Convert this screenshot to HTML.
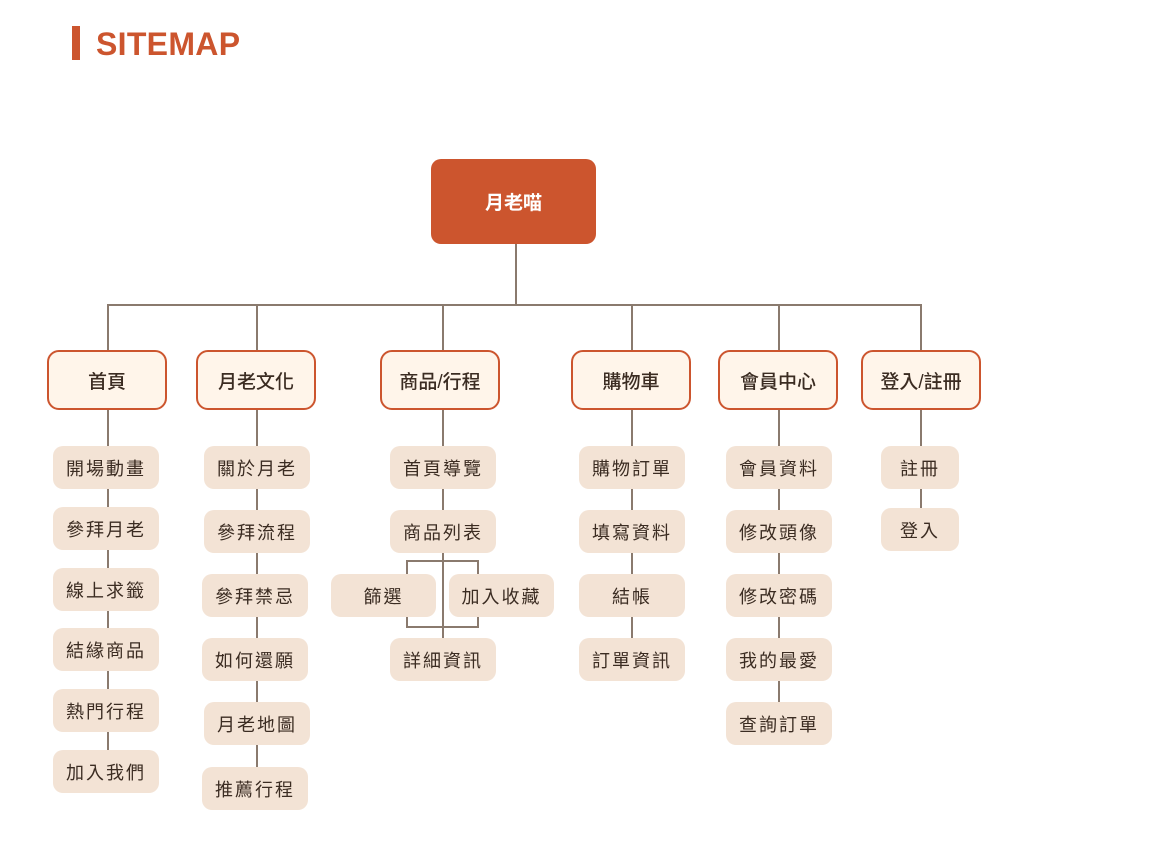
<!DOCTYPE html>
<html><head><meta charset="utf-8"><style>
body{margin:0;width:1152px;height:850px;background:#fff;position:relative;overflow:hidden;font-family:"Liberation Sans","Noto Sans CJK TC",sans-serif;color:#3b2c22}
.t{position:absolute;left:72px;top:26px;height:34px;border-left:8px solid #cc552e;padding-left:16px;font-size:32px;font-weight:bold;color:#cc552e;line-height:36px;letter-spacing:0.3px}
.b{position:absolute;display:flex;align-items:center;justify-content:center;box-sizing:border-box}
.r{background:#cc552e;color:#fff;border-radius:10px;font-weight:bold;font-size:19px}
.l1{width:120px;height:60px;background:#fff5ea;border:2px solid #cc552e;border-radius:12px;font-size:19px;font-weight:500}
.s{height:43px;width:106px;background:#f3e3d5;border-radius:10px;font-size:18px;letter-spacing:2px}
.ln{position:absolute;background:#8a7a6e}
</style></head><body>
<div class="t">SITEMAP</div>
<div class="b r" style="left:431px;top:159px;width:165px;height:85px">月老喵</div>
<div class="ln" style="left:515px;top:244px;width:2px;height:62px"></div>
<div class="ln" style="left:107px;top:304px;width:815px;height:2px"></div>
<div class="ln" style="left:107px;top:305px;width:2px;height:465px"></div>
<div class="ln" style="left:256px;top:305px;width:2px;height:483px"></div>
<div class="ln" style="left:442px;top:305px;width:2px;height:350px"></div>
<div class="ln" style="left:631px;top:305px;width:2px;height:350px"></div>
<div class="ln" style="left:778px;top:305px;width:2px;height:420px"></div>
<div class="ln" style="left:920px;top:305px;width:2px;height:225px"></div>
<div class="ln" style="left:406px;top:560px;width:73px;height:2px"></div>
<div class="ln" style="left:406px;top:560px;width:2px;height:16px"></div>
<div class="ln" style="left:477px;top:560px;width:2px;height:16px"></div>
<div class="ln" style="left:406px;top:626px;width:73px;height:2px"></div>
<div class="ln" style="left:406px;top:614px;width:2px;height:13px"></div>
<div class="ln" style="left:477px;top:614px;width:2px;height:13px"></div>

<div class="b l1" style="left:47px;top:350px">首頁</div>
<div class="b l1" style="left:196px;top:350px">月老文化</div>
<div class="b l1" style="left:380px;top:350px">商品/行程</div>
<div class="b l1" style="left:571px;top:350px">購物車</div>
<div class="b l1" style="left:718px;top:350px">會員中心</div>
<div class="b l1" style="left:861px;top:350px">登入/註冊</div>

<div class="b s" style="left:53px;top:446px">開場動畫</div>
<div class="b s" style="left:53px;top:507px">參拜月老</div>
<div class="b s" style="left:53px;top:568px">線上求籤</div>
<div class="b s" style="left:53px;top:628px">結緣商品</div>
<div class="b s" style="left:53px;top:689px">熱門行程</div>
<div class="b s" style="left:53px;top:750px">加入我們</div>

<div class="b s" style="left:204px;top:446px">關於月老</div>
<div class="b s" style="left:204px;top:510px">參拜流程</div>
<div class="b s" style="left:202px;top:574px">參拜禁忌</div>
<div class="b s" style="left:202px;top:638px">如何還願</div>
<div class="b s" style="left:204px;top:702px">月老地圖</div>
<div class="b s" style="left:202px;top:767px">推薦行程</div>

<div class="b s" style="left:390px;top:446px">首頁導覽</div>
<div class="b s" style="left:390px;top:510px">商品列表</div>
<div class="b s" style="left:331px;top:574px;width:105px">篩選</div>
<div class="b s" style="left:449px;top:574px;width:105px">加入收藏</div>
<div class="b s" style="left:390px;top:638px">詳細資訊</div>

<div class="b s" style="left:579px;top:446px">購物訂單</div>
<div class="b s" style="left:579px;top:510px">填寫資料</div>
<div class="b s" style="left:579px;top:574px">結帳</div>
<div class="b s" style="left:579px;top:638px">訂單資訊</div>

<div class="b s" style="left:726px;top:446px">會員資料</div>
<div class="b s" style="left:726px;top:510px">修改頭像</div>
<div class="b s" style="left:726px;top:574px">修改密碼</div>
<div class="b s" style="left:726px;top:638px">我的最愛</div>
<div class="b s" style="left:726px;top:702px">查詢訂單</div>

<div class="b s" style="left:881px;top:446px;width:78px">註冊</div>
<div class="b s" style="left:881px;top:508px;width:78px">登入</div>
</body></html>
